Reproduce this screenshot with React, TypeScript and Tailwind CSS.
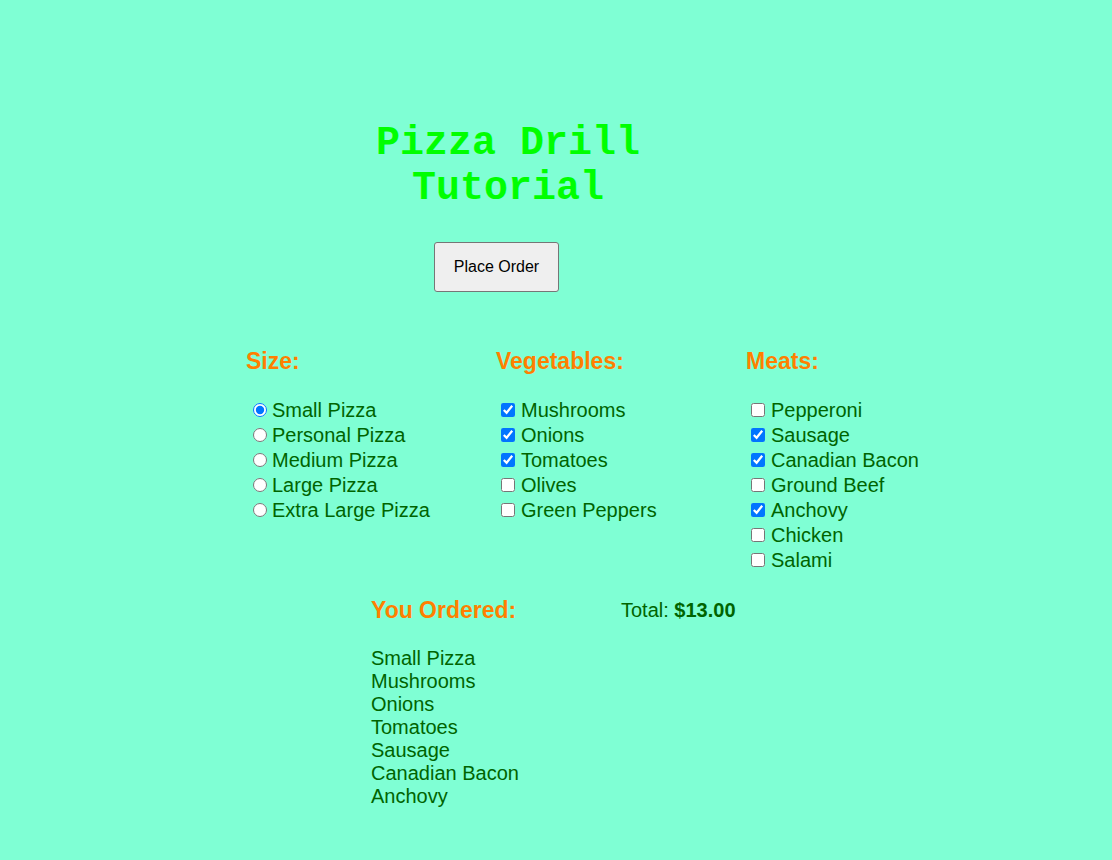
import { useState } from 'react';

const sizes = [
  { name: 'Small Pizza', price: 6 },
  { name: 'Personal Pizza', price: 8 },
  { name: 'Medium Pizza', price: 10 },
  { name: 'Large Pizza', price: 14 },
  { name: 'Extra Large Pizza', price: 16 },
];

const vegetables = ['Mushrooms', 'Onions', 'Tomatoes', 'Olives', 'Green Peppers'];
const meats = ['Pepperoni', 'Sausage', 'Canadian Bacon', 'Ground Beef', 'Anchovy', 'Chicken', 'Salami'];

export default function App() {
  const [size, setSize] = useState('Small Pizza');
  const [veg, setVeg] = useState<string[]>(['Mushrooms', 'Onions', 'Tomatoes']);
  const [meat, setMeat] = useState<string[]>(['Sausage', 'Canadian Bacon', 'Anchovy']);

  function toggle(list: string[], set: (v: string[]) => void, item: string) {
    set(list.includes(item) ? list.filter((x) => x !== item) : [...list, item]);
  }

  const ordered = [size, ...vegetables.filter((v) => veg.includes(v)), ...meats.filter((m) => meat.includes(m))];
  const total = 7 + veg.length + meat.length + (sizes.find((s) => s.name === size)?.price ?? 6) - 6;

  return (
    <div className="min-h-screen bg-[#7fffd4] font-['Liberation_Sans',Arial,sans-serif] text-[#006400]">
      <div className="pt-[121px]">
        <h1 className="ml-[358px] w-[300px] text-center font-['Courier_New','Liberation_Mono',monospace] text-[40px] font-bold leading-[45px] text-[#00ff00]">
          Pizza Drill Tutorial
        </h1>
        <button className="ml-[434px] mt-[31px] h-[50px] w-[125px] rounded-[3px] border border-[#767676] bg-[#efefef] text-[16px] text-black">
          Place Order
        </button>
      </div>

      <div className="mt-[56px] flex pl-[246px]">
        <div className="w-[250px]">
          <h3 className="text-[23px] font-bold leading-[26px] text-[#ff7f00]">Size:</h3>
          <div className="mt-[23px]">
            {sizes.map((s) => (
              <label key={s.name} className="flex h-[25px] items-center text-[20px]">
                <input
                  type="radio"
                  name="size"
                  checked={size === s.name}
                  onChange={() => setSize(s.name)}
                  className="ml-[7px] mr-[5px] h-[14px] w-[14px]"
                />
                {s.name}
              </label>
            ))}
          </div>
        </div>
        <div className="w-[250px]">
          <h3 className="text-[23px] font-bold leading-[26px] text-[#ff7f00]">Vegetables:</h3>
          <div className="mt-[23px]">
            {vegetables.map((v) => (
              <label key={v} className="flex h-[25px] items-center text-[20px]">
                <input
                  type="checkbox"
                  checked={veg.includes(v)}
                  onChange={() => toggle(veg, setVeg, v)}
                  className="ml-[5px] mr-[6px] h-[14px] w-[14px]"
                />
                {v}
              </label>
            ))}
          </div>
        </div>
        <div className="w-[250px]">
          <h3 className="text-[23px] font-bold leading-[26px] text-[#ff7f00]">Meats:</h3>
          <div className="mt-[23px]">
            {meats.map((m) => (
              <label key={m} className="flex h-[25px] items-center text-[20px]">
                <input
                  type="checkbox"
                  checked={meat.includes(m)}
                  onChange={() => toggle(meat, setMeat, m)}
                  className="ml-[5px] mr-[6px] h-[14px] w-[14px]"
                />
                {m}
              </label>
            ))}
          </div>
        </div>
      </div>

      <div className="mt-[25px] flex pb-[53px] pl-[371px]">
        <div className="w-[250px]">
          <h3 className="text-[23px] font-bold leading-[26px] text-[#ff7f00]">You Ordered:</h3>
          <div className="mt-[24px] text-[20px] leading-[23px]">
            {ordered.map((o) => (
              <div key={o}>{o}</div>
            ))}
          </div>
        </div>
        <div className="pt-[2px] text-[20px] leading-[23px]">
          Total: <span className="font-bold">${total.toFixed(2)}</span>
        </div>
      </div>
    </div>
  );
}
